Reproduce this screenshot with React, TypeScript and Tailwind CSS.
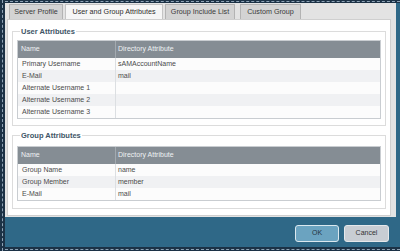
import React from 'react'

const font = { fontFamily: '"Liberation Sans", Arial, sans-serif' }

interface Row {
  name: string
  attr: string
}

const userRows: Row[] = [
  { name: 'Primary Username', attr: 'sAMAccountName' },
  { name: 'E-Mail', attr: 'mail' },
  { name: 'Alternate Username 1', attr: '' },
  { name: 'Alternate Username 2', attr: '' },
  { name: 'Alternate Username 3', attr: '' },
]

const groupRows: Row[] = [
  { name: 'Group Name', attr: 'name' },
  { name: 'Group Member', attr: 'member' },
  { name: 'E-Mail', attr: 'mail' },
]

function AttrTable({ rows }: { rows: Row[] }) {
  return (
    <div className="border border-[#c9cdd1] bg-[#fcfcfc]">
      <div className="flex h-[17px] items-center bg-[#858d94] text-[7px] text-[#eef1f3]">
        <div className="w-[98px] pl-[3px] h-full flex items-center border-r border-[#a3aab0]">Name</div>
        <div className="pl-[2px]">Directory Attribute</div>
      </div>
      {rows.map((r, i) => (
        <div
          key={r.name + i}
          className={`flex h-[12px] items-center text-[7px] text-[#4b4b4b] ${
            i % 2 === 1 ? 'bg-[#f0f1f3]' : 'bg-[#fcfcfc]'
          }`}
        >
          <div className="w-[98px] pl-[4px] h-full flex items-center border-r border-[#dcdfe2]">{r.name}</div>
          <div className="pl-[2px]">{r.attr}</div>
        </div>
      ))}
    </div>
  )
}

function Tab({ label, width, active }: { label: string; width: string; active?: boolean }) {
  return (
    <div
      className={`${width} h-[15px] flex items-center justify-center text-[7.2px] border border-b-0 ${
        active
          ? 'bg-[#f6f6f6] border-[#c4c4c4] text-[#2e2e2e]'
          : 'bg-[#d3d3d3] border-[#b3b3b3] text-[#3a3a3a]'
      }`}
    >
      {label}
    </div>
  )
}

export default function App() {
  return (
    <div className="w-[400px] h-[251px] flex bg-[#2f6887] overflow-hidden" style={font}>
      {/* left dashed strip */}
      <div className="w-[5px] h-full bg-[#1c3246] flex justify-center">
        <div className="h-full border-l border-dashed border-[#8ea3b6]" />
      </div>

      <div className="flex-1 flex flex-col">
        {/* top dashed strip */}
        <div className="h-[3px] bg-[#1c3246] flex items-center">
          <div className="w-full border-t border-dashed border-[#8ea3b6]" />
        </div>

        <div className="flex">
          <div className="w-[391px] h-[214px] bg-[#e3e3e3] flex flex-col">
            {/* tabs */}
            <div className="h-[16px] flex items-end pl-[4px] gap-[2px]">
              <Tab label="Server Profile" width="w-[54px]" />
              <Tab label="User and Group Attributes" width="w-[98px]" active />
              <Tab label="Group Include List" width="w-[70px]" />
              <div className="w-[1px]" />
              <Tab label="Custom Group" width="w-[61px]" />
            </div>

            {/* panel */}
            <div className="ml-[2px] w-[384px] h-[197px] bg-white border border-[#cfcfcf] px-[4px]">
              <fieldset className="mt-[7px] border border-[#dcdcdc] px-[4px] pt-[4px] pb-[6px]">
                <legend className="ml-[3px] px-[1px] text-[7.5px] leading-[9px] font-bold text-[#3e5566]">
                  User Attributes
                </legend>
                <AttrTable rows={userRows} />
              </fieldset>

              <fieldset className="mt-[5px] border border-[#dcdcdc] px-[4px] pt-[6px] pb-[7px]">
                <legend className="ml-[3px] px-[1px] text-[7.5px] leading-[9px] font-bold text-[#3e5566]">
                  Group Attributes
                </legend>
                <AttrTable rows={groupRows} />
              </fieldset>
            </div>
          </div>
          <div className="flex-1" />
        </div>

        {/* footer */}
        <div className="h-[30px] flex justify-end items-start pt-[8px] pr-[11px] gap-[5px]">
          <button className="w-[44px] h-[17px] rounded-[3px] border border-[#dbe8ef] bg-[#6ba3c0] text-[7px] text-[#243540]">
            OK
          </button>
          <button className="w-[45px] h-[17px] rounded-[3px] border border-[#e5e8eb] bg-[#c8cdd3] text-[7px] text-[#333]">
            Cancel
          </button>
        </div>

        {/* bottom dashed strip */}
        <div className="h-[4px] bg-[#1c3246] flex items-center">
          <div className="w-full border-t border-dashed border-[#8ea3b6]" />
        </div>
      </div>
    </div>
  )
}
